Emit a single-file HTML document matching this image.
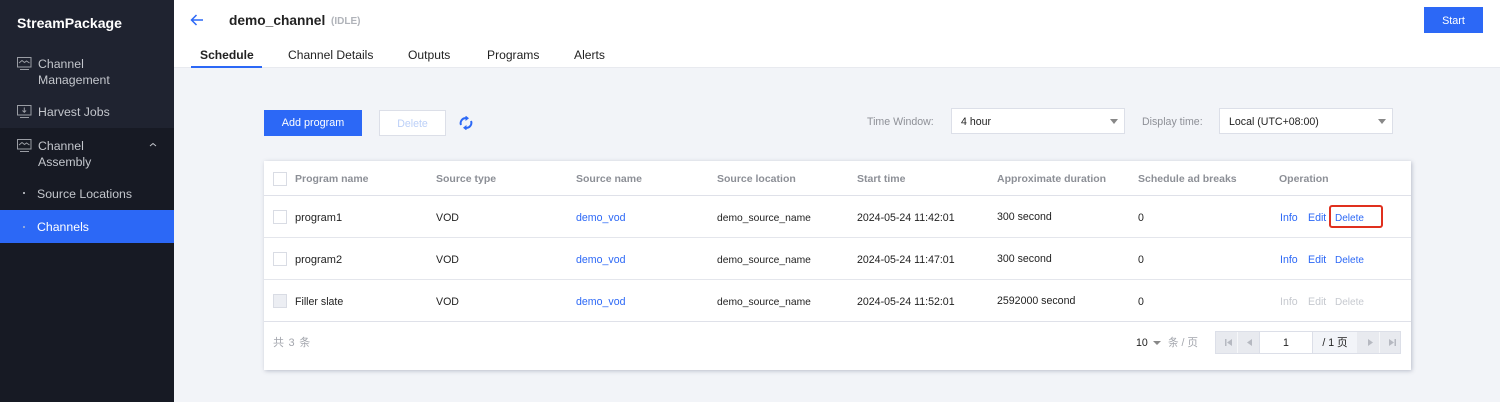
<!DOCTYPE html>
<html><head><meta charset="utf-8">
<style>
*{box-sizing:border-box}
html,body{margin:0;padding:0}
body{width:1500px;height:402px;position:relative;overflow:hidden;background:#f2f4f8;font-family:"Liberation Sans","Noto Sans CJK SC",sans-serif;font-size:10.6px;color:#222;}
.a{position:absolute;white-space:nowrap;line-height:16px}
.side{position:absolute;left:0;top:0;width:174px;height:402px;background:#1f2330}
.sub{position:absolute;left:0;top:128px;width:174px;height:274px;background:#171a24}
.sel{position:absolute;left:0;top:210px;width:174px;height:33px;background:#2c68f6}
.n{color:#c3c6cc;font-size:12.3px;line-height:16px}
.top{position:absolute;left:174px;top:0;width:1326px;height:68px;background:#fff;border-bottom:1px solid #e8eaef}
.tab{font-size:12.1px;color:#222}
.btn{position:absolute;background:#2c68f6;color:#fff;text-align:center;font-size:10.8px}
.sel2{position:absolute;background:#fff;border:1px solid #dcdfe8;height:26px;line-height:26px;padding-left:9px;font-size:10.6px;color:#222}
.sel2 i{position:absolute;right:6px;top:10px;width:0;height:0;border-left:4px solid transparent;border-right:4px solid transparent;border-top:5px solid #888}
.card{position:absolute;left:264px;top:161px;width:1147px;height:209px;background:#fff;box-shadow:1px 1px 4px rgba(80,90,120,.35)}
.l{position:absolute;left:0;width:1147px;height:1px;background:#e4e6ec}
.cb{position:absolute;left:9px;width:14px;height:14px;background:#fff;border:1px solid #d9dce4}
.h{color:#8c8f96;font-weight:bold;font-size:10.5px}
.b{color:#2c68f6}
.g{color:#c6c9cf}
.s{font-size:10.3px}
.d{font-size:10px}
</style></head><body>
<div class="side"></div><div class="sub"></div><div class="sel"></div>
<div class="a" style="left:17px;top:15px;color:#fff;font-weight:bold;font-size:14.1px">StreamPackage</div>
<svg class="a" style="left:17px;top:57px" width="15" height="14" fill="none" stroke="#9a9da4"><rect x=".5" y=".5" width="13.5" height="9.5"/><path d="M2 6l3-2.500 2.500 2 2-1.500 3 2M3 12.500h9"/></svg>
<div class="a n" style="left:38px;top:56px">Channel</div>
<div class="a n" style="left:38px;top:72px">Management</div>
<svg class="a" style="left:17px;top:105px" width="15" height="14" fill="none" stroke="#9a9da4"><rect x=".5" y=".5" width="13.500" height="9.500"/><path d="M7.300 2.500v4.500M5.500 5.500l1.800 1.800 1.800-1.800M3 12.500h9"/></svg>
<div class="a n" style="left:38px;top:104px">Harvest Jobs</div>
<svg class="a" style="left:17px;top:139px" width="15" height="14" fill="none" stroke="#9a9da4"><rect x=".5" y=".5" width="13.500" height="9.500"/><path d="M2 6l3-2.500 2.500 2 2-1.500 3 2M3 12.500h9"/></svg>
<div class="a n" style="left:38px;top:138px">Channel</div>
<div class="a n" style="left:38px;top:154px">Assembly</div>
<svg class="a" style="left:149px;top:142px" width="8" height="6" fill="none" stroke="#c3c6cc"><path d="M1 4l3-2.500 3 2.500"/></svg>
<div class="a" style="left:23px;top:192px;width:2px;height:2px;background:#a5a8ae"></div>
<div class="a n" style="left:37px;top:186px">Source Locations</div>
<div class="a" style="left:23px;top:226px;width:2px;height:2px;background:#8fa6dc"></div>
<div class="a n" style="left:37px;top:219px;color:#fff">Channels</div>

<div class="top"></div>
<svg class="a" style="left:190px;top:13px" width="14" height="14" fill="none" stroke="#2c68f6" stroke-width="1.500"><path d="M13 7H1.500M6.500 2L1.500 7l5 5"/></svg>
<div class="a" style="left:229px;top:13px;font-size:13.750px;font-weight:bold;color:#222">demo_channel</div>
<div class="a" style="left:331px;top:14px;font-size:10px;font-weight:bold;color:#b0b3b9">(IDLE)</div>
<div class="btn" style="left:1424px;top:7px;width:59px;height:26px;line-height:28px">Start</div>
<div class="a tab" style="left:200px;top:47px;font-weight:bold">Schedule</div>
<div class="a" style="left:191px;top:66px;width:71px;height:2px;background:#2c68f6"></div>
<div class="a tab" style="left:288px;top:47px">Channel Details</div>
<div class="a tab" style="left:408px;top:47px">Outputs</div>
<div class="a tab" style="left:487px;top:47px">Programs</div>
<div class="a tab" style="left:574px;top:47px">Alerts</div>

<div class="btn" style="left:264px;top:110px;width:98px;height:26px;line-height:27px">Add program</div>
<div class="a" style="left:379px;top:110px;width:67px;height:26px;line-height:26px;background:#fff;border:1px solid #dcdfe8;color:#bcd0f8;text-align:center">Delete</div>
<svg class="a" style="left:459px;top:116px" width="14" height="14" fill="none" stroke="#2c68f6" stroke-width="2"><path d="M2 9A5 5 0 0 1 7.500 2.200M12 5A5 5 0 0 1 6.500 11.800"/><path d="M6.500 -.5v5.500L10 2.200zM7.500 14.500V9L4 11.800z" fill="#2c68f6" stroke="none"/></svg>
<div class="a" style="left:867px;top:114px;color:#8e9097">Time Window:</div>
<div class="sel2" style="left:951px;top:108px;width:174px">4 hour<i></i></div>
<div class="a" style="left:1142px;top:114px;color:#8e9097">Display time:</div>
<div class="sel2" style="left:1219px;top:108px;width:174px">Local (UTC+08:00)<i></i></div>

<div class="card">
<div class="l" style="top:34px;background:#dfe1e9"></div>
<div class="l" style="top:76px"></div>
<div class="l" style="top:118px"></div>
<div class="l" style="top:160px;background:#dfe1e9"></div>
<div class="cb" style="top:11px"></div>
<div class="cb" style="top:49px"></div>
<div class="cb" style="top:91px"></div>
<div class="cb" style="top:133px;background:#eceef3"></div>

<div class="a h" style="left:31px;top:10px">Program name</div>
<div class="a h" style="left:172px;top:10px">Source type</div>
<div class="a h" style="left:312px;top:10px">Source name</div>
<div class="a h" style="left:453px;top:10px">Source location</div>
<div class="a h" style="left:593px;top:10px">Start time</div>
<div class="a h" style="left:733px;top:10px">Approximate duration</div>
<div class="a h" style="left:874px;top:10px">Schedule ad breaks</div>
<div class="a h" style="left:1015px;top:10px">Operation</div>

<div class="a" style="left:31px;top:49px;font-size:11px">program1</div>
<div class="a" style="left:172px;top:49px">VOD</div>
<div class="a b" style="left:312px;top:49px">demo_vod</div>
<div class="a s" style="left:453px;top:50px">demo_source_name</div>
<div class="a" style="left:593px;top:49px">2024-05-24 11:42:01</div>
<div class="a" style="left:733px;top:48px">300 second</div>
<div class="a" style="left:874px;top:49px">0</div>
<div class="a b" style="left:1016px;top:49px">Info</div>
<div class="a b" style="left:1044px;top:49px">Edit</div>
<div class="a b d" style="left:1071px;top:50px">Delete</div>
<div class="a" style="left:1065px;top:44px;width:54px;height:23px;border:2px solid #e0301e;border-radius:3px"></div>

<div class="a" style="left:31px;top:91px;font-size:11px">program2</div>
<div class="a" style="left:172px;top:91px">VOD</div>
<div class="a b" style="left:312px;top:91px">demo_vod</div>
<div class="a s" style="left:453px;top:92px">demo_source_name</div>
<div class="a" style="left:593px;top:91px">2024-05-24 11:47:01</div>
<div class="a" style="left:733px;top:90px">300 second</div>
<div class="a" style="left:874px;top:91px">0</div>
<div class="a b" style="left:1016px;top:91px">Info</div>
<div class="a b" style="left:1044px;top:91px">Edit</div>
<div class="a b d" style="left:1071px;top:92px">Delete</div>

<div class="a" style="left:31px;top:133px">Filler slate</div>
<div class="a" style="left:172px;top:133px">VOD</div>
<div class="a b" style="left:312px;top:133px">demo_vod</div>
<div class="a s" style="left:453px;top:134px">demo_source_name</div>
<div class="a" style="left:593px;top:133px">2024-05-24 11:52:01</div>
<div class="a" style="left:733px;top:132px">2592000 second</div>
<div class="a" style="left:874px;top:133px">0</div>
<div class="a g" style="left:1016px;top:133px">Info</div>
<div class="a g" style="left:1044px;top:133px">Edit</div>
<div class="a g d" style="left:1071px;top:134px">Delete</div>

<div class="a" style="left:9px;top:174px;color:#a3a6ad;letter-spacing:.75px;font-size:11px">共 3 条</div>
<div class="a" style="left:872px;top:174px">10</div>
<div class="a" style="left:889px;top:180px;width:0;height:0;border-left:4px solid transparent;border-right:4px solid transparent;border-top:4px solid #888"></div>
<div class="a" style="left:904px;top:174px;color:#a3a6ad">条 / 页</div>

<div class="a" style="left:951px;top:170px;width:186px;height:23px;background:#e8eaef;border:1px solid #dcdfe8"></div>
<div class="a" style="left:973px;top:171px;width:1px;height:21px;background:#f6f7f9"></div>
<div class="a" style="left:995px;top:171px;width:54px;height:21px;background:#fff;text-align:center;line-height:22px;border-left:1px solid #dcdfe8;border-right:1px solid #dcdfe8">1</div>
<div class="a" style="left:1049px;top:171px;width:44px;height:21px;background:#f2f4f8;text-align:center;line-height:22px">/ 1 页</div>
<div class="a" style="left:1115px;top:171px;width:1px;height:21px;background:#f6f7f9"></div>
<svg class="a" style="left:951px;top:170px" width="186" height="23" fill="#b6b9c1"><path d="M10 8h1.500v7H10zM12 11.500l5-3.500v7z"/><path d="M32 11.500l5-3.500v7z"/><path d="M153 8l5 3.500-5 3.500z"/><path d="M174 8l5 3.500-5 3.500zM179.500 8h1.500v7h-1.500z"/></svg>
</div>
</body></html>
